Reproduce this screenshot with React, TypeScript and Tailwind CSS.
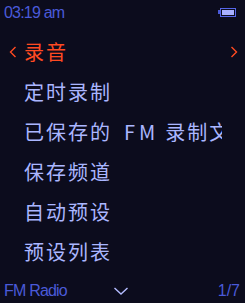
import React from 'react';

const items: React.ReactNode[] = [
  '录音',
  '定时录制',
  <>
    已保存的<span className="ml-[12px] tracking-[4px]">FM</span>
    <span className="ml-[6px]">录制文件</span>
  </>,
  '保存频道',
  '自动预设',
  '预设列表',
];

export default function App() {
  return (
    <div
      className="w-[245px] h-[303px] bg-[#0c0c1d] flex flex-col overflow-hidden"
      style={{ fontFamily: '"Liberation Sans", "Noto Sans CJK SC", sans-serif' }}
    >
      {/* status bar */}
      <div className="h-[24px] flex items-center justify-between pl-[4px] pr-[9px]">
        <span className="text-[16px] leading-none tracking-[-0.8px] text-[#4a5ad8] pt-[1px]">03:19 am</span>
        <div className="flex items-center">
          <div className="w-[2px] h-[4px] bg-[#4a5ad8]" />
          <div className="w-[16px] h-[9px] border-[1.5px] border-[#5565e8] p-[1px] flex">
            <div className="flex-1 bg-[#a8b0ff]" />
          </div>
        </div>
      </div>

      {/* menu */}
      <div className="flex flex-col pt-[8px]">
        {items.map((label, i) => (
          <div key={i} className="h-[40px] flex items-center">
            <div className="w-[24px] flex justify-center text-[#ff4a22]">
              {i === 0 && (
                <svg width="8" height="12" viewBox="0 0 8 12" className="ml-[2px]">
                  <path d="M6.5 1 L1.5 6 L6.5 11" fill="none" stroke="currentColor" strokeWidth="1.4" />
                </svg>
              )}
            </div>
            <div
              className={
                'w-[198px] whitespace-nowrap text-[20px] leading-[28px] tracking-[2px] ' +
                (i === 2 ? 'overflow-hidden ' : '') +
                (i === 0 ? 'text-[#ff4a22]' : 'text-[#aab6ff]')
              }
              style={{ fontFamily: '"Noto Sans CJK SC", "Liberation Sans", sans-serif' }}
            >
              {label}
            </div>
            <div className="flex-1 flex justify-center text-[#ff4a22]">
              {i === 0 && (
                <svg width="8" height="12" viewBox="0 0 8 12">
                  <path d="M1.5 1 L6.5 6 L1.5 11" fill="none" stroke="currentColor" strokeWidth="1.4" />
                </svg>
              )}
            </div>
          </div>
        ))}
      </div>

      {/* footer */}
      <div className="flex-1 flex items-center justify-between pl-[4px] pr-[5px] pt-[6px]">
        <span className="w-[80px] text-[16px] leading-none tracking-[-0.8px] text-[#4a5ad8]">FM Radio</span>
        <svg width="16" height="8" viewBox="0 0 16 8" className="mr-[3px]">
          <path d="M1.5 1 L8 7 L14.5 1" fill="none" stroke="#b4bcff" strokeWidth="1.4" />
        </svg>
        <span className="w-[80px] text-right text-[16px] leading-none text-[#4a5ad8]">1/7</span>
      </div>
    </div>
  );
}
